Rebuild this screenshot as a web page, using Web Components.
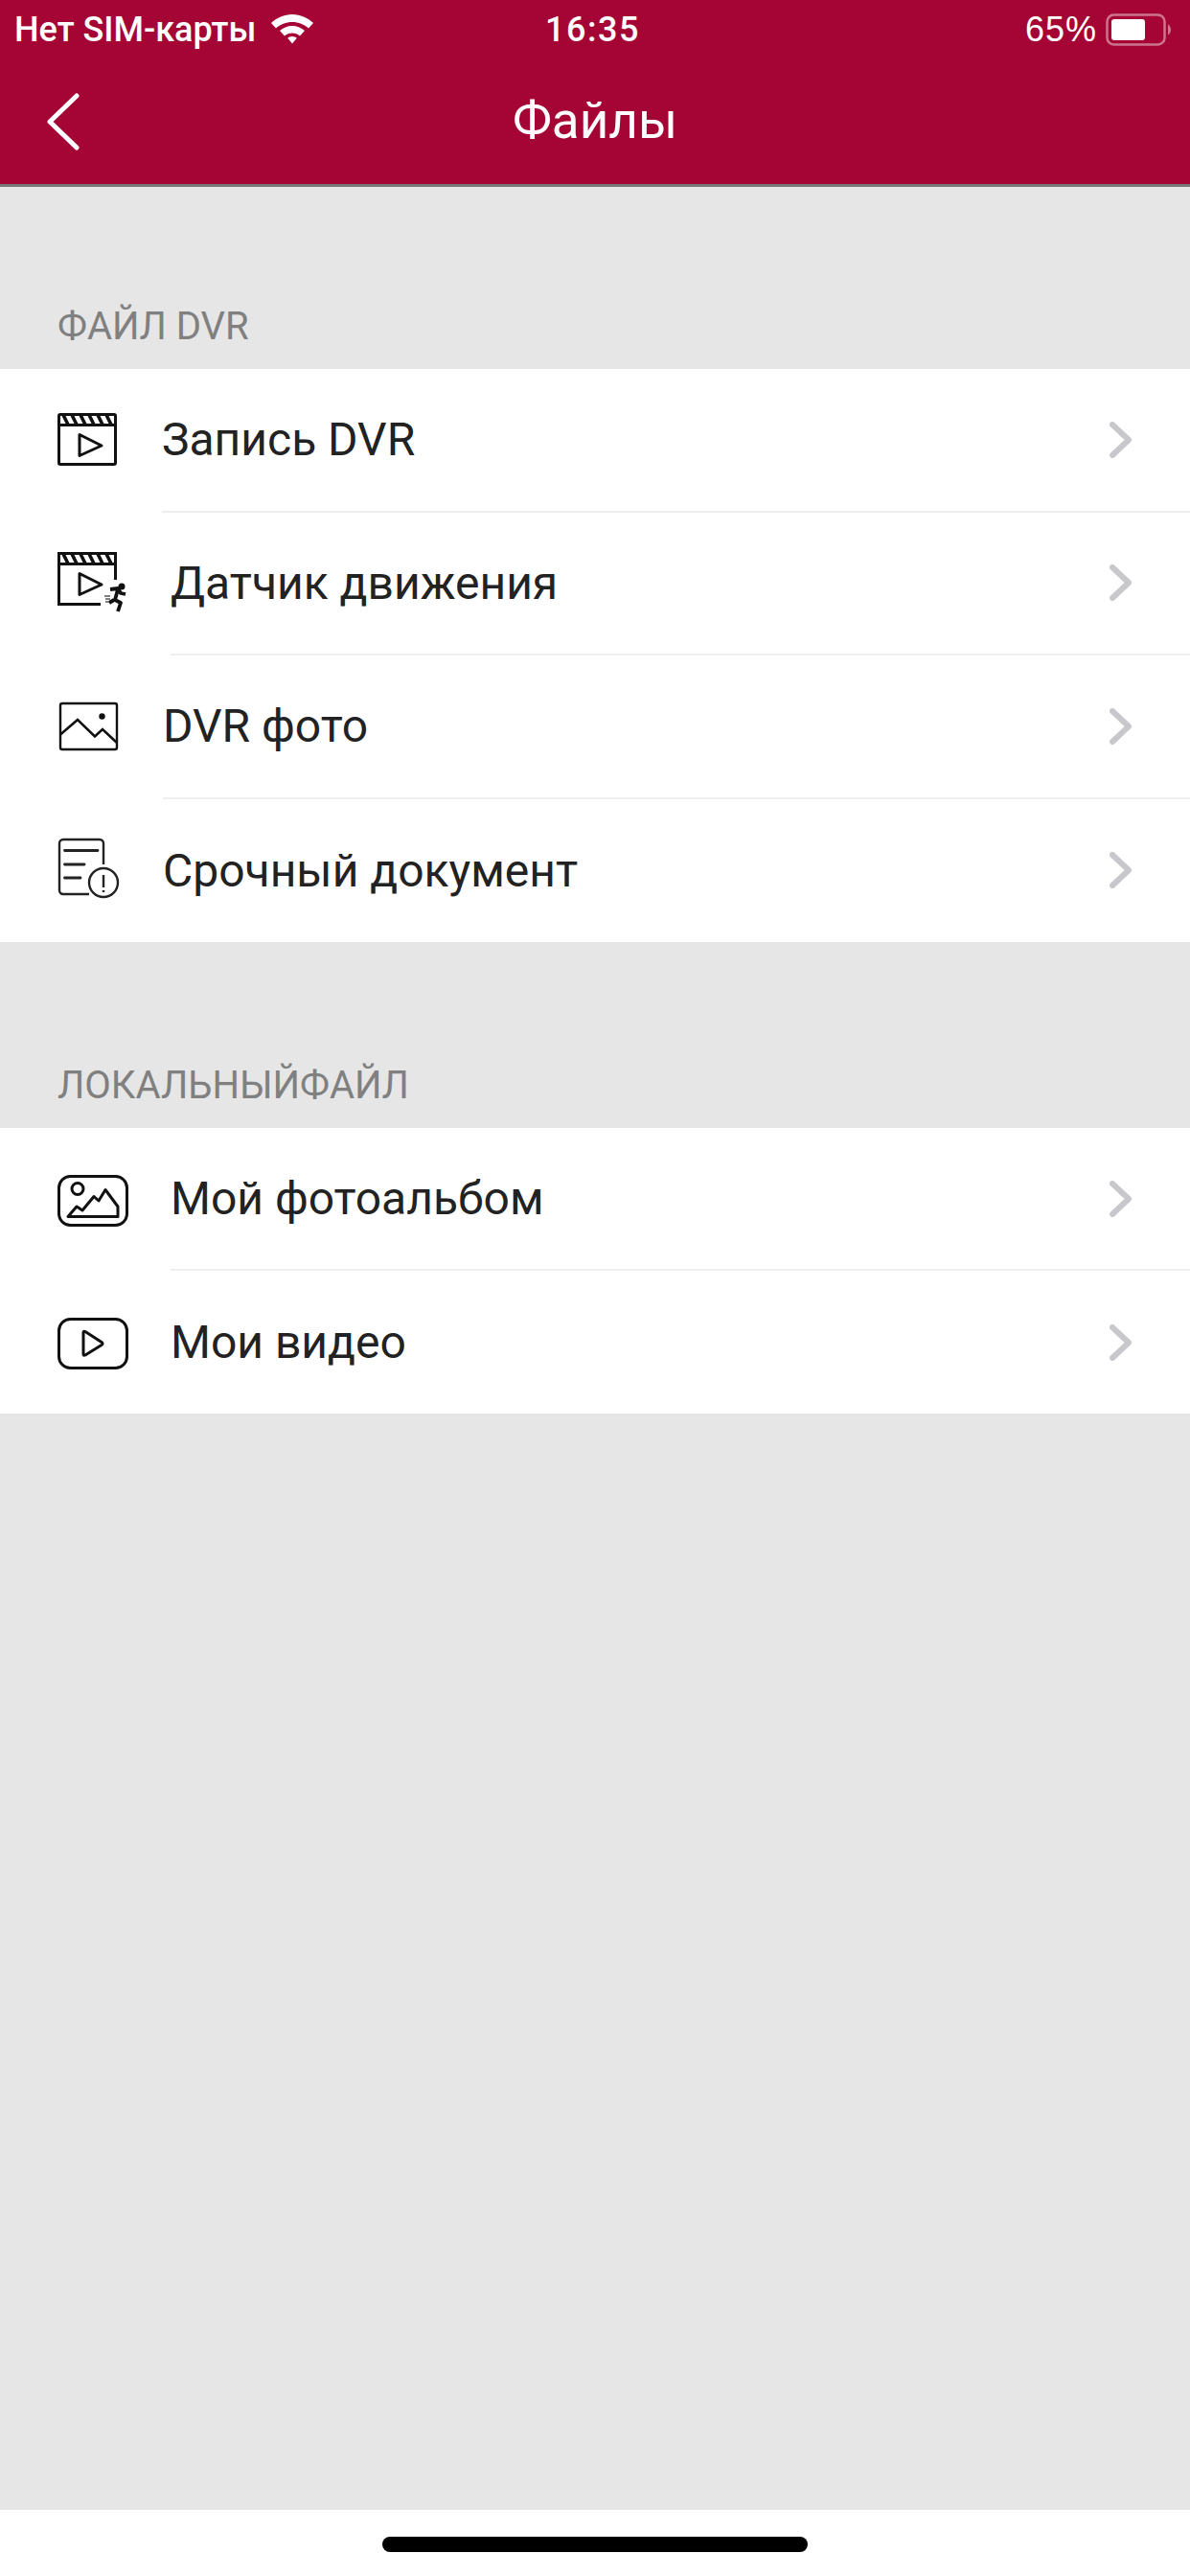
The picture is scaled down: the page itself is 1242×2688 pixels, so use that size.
<!DOCTYPE html>
<html lang="ru">
<head>
<meta charset="utf-8">
<title>Файлы</title>
<style>
  html, body { margin: 0; height: 100%; }
  body { background: #e6e6e6; font-family: Roboto, "Liberation Sans", sans-serif; }
</style>
</head>
<body>
<files-app>
  <status-bar carrier="Нет SIM-карты" time="16:35" battery="65%"></status-bar>
  <nav-header title-text="Файлы"></nav-header>
  <file-section label="ФАЙЛ DVR" style="--top: 123px; --bottom: 21px; --row-h: 149.5px">
    <file-row label="Запись DVR" gap="29">
      <svg slot="icon" viewBox="0 0 100 100" fill="none" stroke="#111" stroke-width="3">
        <rect x="21.500" y="22.500" width="59" height="52" rx="1.500"/>
        <path d="M21.500 33.500H80.500"/>
        <path d="M26 23l5 10M35 23l5 10M44 23l5 10M53 23l5 10M62 23l5 10M71 23l5 10" stroke-width="3.600"/>
        <path d="M43 43.500L66 55 43 65.500Z" stroke-linejoin="round"/>
      </svg>
    </file-row>
    <file-row label="Датчик движения" gap="38">
      <svg slot="icon" viewBox="0 0 100 100" fill="none" stroke="#111" stroke-width="3">
        <path d="M80.500 46V18.500H21.500V71.500H65"/>
        <path d="M21.500 29.500H80.500"/>
        <path d="M26 19l5 10M35 19l5 10M44 19l5 10M53 19l5 10M62 19l5 10M71 19l5 10" stroke-width="3.600"/>
        <path d="M43 39.500L66 51 43 61.500Z" stroke-linejoin="round"/>
        <circle cx="87" cy="53" r="3.500" fill="#111" stroke="none"/>
        <path d="M75 56l8-1 3 5 5 1M83 56l-3 11 6 3-3 9M79 67l-5 3" stroke-width="3.800" stroke-linejoin="round"/>
        <path d="M69 63h6M70 66h5M70 69h4" stroke-width="1.400" stroke="#555"/>
      </svg>
    </file-row>
    <file-row label="DVR фото" gap="30">
      <svg slot="icon" viewBox="0 0 100 100" fill="none" stroke="#111" stroke-width="2.400">
        <rect x="23" y="25" width="59" height="48" rx="2"/>
        <path d="M23 57.500L41 42 59 59.500 67 52 82 66" stroke-width="2.600"/>
        <circle cx="66.500" cy="38.500" r="3.200" fill="#111" stroke="none"/>
      </svg>
    </file-row>
    <file-row label="Срочный документ" gap="30" last>
      <svg slot="icon" viewBox="0 0 100 100" fill="none" stroke="#222" stroke-width="2.400">
        <path d="M68 44V22a4 4 0 0 0-4-4H26a4 4 0 0 0-4 4V71a4 4 0 0 0 4 4H53"/>
        <path d="M27.500 29.500H62M27.500 44H48M27.500 58H44" stroke-width="2.800" stroke-linecap="round"/>
        <circle cx="68" cy="63" r="15"/>
        <path d="M68 55V68M68 71V73"/>
      </svg>
    </file-row>
  </file-section>
  <file-section label="ЛОКАЛЬНЫЙФАЙЛ" style="--top: 127px; --bottom: 21px; --row-h: 149px">
    <file-row label="Мой фотоальбом" gap="38">
      <svg slot="icon" viewBox="0 0 100 100" fill="none" stroke="#111" stroke-width="3">
        <rect x="21.500" y="25.500" width="71" height="51" rx="12"/>
        <circle cx="41" cy="38.500" r="6"/>
        <path d="M31 67.500L40 57 46 61 58 46.500 63 51 70 39.500 83 57V67.500Z" stroke-linejoin="round"/>
      </svg>
    </file-row>
    <file-row label="Мои видео" gap="38" last>
      <svg slot="icon" viewBox="0 0 100 100" fill="none" stroke="#111" stroke-width="3">
        <rect x="21.500" y="25.500" width="71" height="51" rx="12"/>
        <path d="M47 39.500Q47 37.500 49 38.500L66 49.500Q68 51 66 52.500L49 63Q47 64 47 62Z" stroke-linejoin="round"/>
      </svg>
    </file-row>
  </file-section>
  <home-indicator></home-indicator>
</files-app>

<script>
class FilesApp extends HTMLElement {
  constructor() {
    super();
    this.attachShadow({ mode: 'open' });
    this.shadowRoot.innerHTML = `
      <style>
        :host { display: flex; flex-direction: column; height: 2688px; background: #e6e6e6; }
      </style>
      <slot></slot>
    `;
  }
}

class StatusBar extends HTMLElement {
  constructor() {
    super();
    this.attachShadow({ mode: 'open' });
    this.shadowRoot.innerHTML = `
      <style>
        :host {
          display: grid;
          grid-template-columns: 1fr auto 1fr;
          align-items: center;
          height: 62px;
          padding: 0 20px 0 15px;
          background: #a50534;
          color: #fff;
          font: 400 36px "Liberation Sans", Roboto, sans-serif;
        }
        .left, .right { display: flex; align-items: center; }
        .left { gap: 15px; }
        .right { justify-content: flex-end; gap: 9px; }
        .carrier { font: 500 36px Roboto, "Liberation Sans", sans-serif; }
        .time { font: 500 36px Roboto, "Liberation Sans", sans-serif; letter-spacing: 1.5px; }
        .pct { letter-spacing: 1px; }
        svg { display: block; }
      </style>
      <div class="left">
        <span class="carrier">${this.getAttribute('carrier')}</span>
        <svg width="46" height="38" viewBox="0 0 46 38" fill="#fff">
          <path d="M23 3C14.500 3 7 6.500 1 12L6 17.500C10.500 13.500 16.500 11 23 11S35.500 13.500 40 17.500L45 12C39 6.500 31.500 3 23 3Z"/>
          <path d="M23 15C18 15 13.500 17 10 20L15 25.500C17.200 23.700 20 22.500 23 22.500S28.800 23.700 31 25.500L36 20C32.500 17 28 15 23 15Z"/>
          <path d="M23 26C21 26 19.500 26.800 18.200 27.800L23 33.500 27.800 27.800C26.500 26.800 25 26 23 26Z"/>
        </svg>
      </div>
      <span class="time">${this.getAttribute('time')}</span>
      <div class="right">
        <span class="pct">${this.getAttribute('battery')}</span>
        <svg width="68" height="34" viewBox="0 0 68 34" fill="none">
          <rect x="1.500" y="1.500" width="60" height="31" rx="7" stroke="#fff" stroke-opacity=".45" stroke-width="2.500"/>
          <rect x="6" y="6" width="35" height="22" rx="3" fill="#fff"/>
          <path d="M65 11.500C67 12.500 68 14.500 68 17S67 21.500 65 22.500Z" fill="#fff" fill-opacity=".45"/>
        </svg>
      </div>
    `;
  }
}

class NavHeader extends HTMLElement {
  constructor() {
    super();
    this.attachShadow({ mode: 'open' });
    this.shadowRoot.innerHTML = `
      <style>
        :host {
          display: grid;
          grid-template-columns: 1fr auto 1fr;
          align-items: center;
          height: 130px;
          padding: 0 48px;
          background: #a50534;
          border-bottom: 3px solid #777;
          color: #fff;
          font: 400 53px Roboto, "Liberation Sans", sans-serif;
        }
        svg { display: block; }
        span { margin-bottom: 3px; }
      </style>
      <svg width="36" height="60" viewBox="0 0 36 60" fill="none" stroke="#fff" stroke-width="5" stroke-linecap="round" stroke-linejoin="round">
        <path d="M32 3L4 30 32 57"/>
      </svg>
      <span>${this.getAttribute('title-text')}</span>
      <span></span>
    `;
  }
}

class FileSection extends HTMLElement {
  constructor() {
    super();
    this.attachShadow({ mode: 'open' });
    this.shadowRoot.innerHTML = `
      <style>
        :host { display: block; }
        .label {
          padding: var(--top, 123px) 60px var(--bottom, 20px);
          color: #808080;
          font: 400 40px/46px Roboto, "Liberation Sans", sans-serif;
        }
        .rows { background: #fff; }
      </style>
      <div class="label">${this.getAttribute('label')}</div>
      <div class="rows"><slot></slot></div>
    `;
  }
}

class FileRow extends HTMLElement {
  constructor() {
    super();
    const gap = this.getAttribute('gap') || 30;
    const last = this.hasAttribute('last');
    this.attachShadow({ mode: 'open' });
    this.shadowRoot.innerHTML = `
      <style>
        :host { display: flex; align-items: center; height: var(--row-h, 150px); padding-left: 40px; background: #fff; box-sizing: border-box; }
        ::slotted(svg) { flex: none; width: 100px; height: 100px; }
        .body {
          flex: 1;
          align-self: stretch;
          display: flex;
          align-items: center;
          justify-content: space-between;
          margin-left: ${gap}px;
          padding-right: 60px;
          border-bottom: ${last ? 0 : 2}px solid #eeeeee;
          color: #222;
          font: 400 48px Roboto, "Liberation Sans", sans-serif;
        }
        svg { display: block; }
      </style>
      <slot name="icon"></slot>
      <div class="body">
        <span>${this.getAttribute('label')}</span>
        <svg width="24" height="38" viewBox="0 0 24 38" fill="none" stroke="#c7c7cc" stroke-width="6" stroke-linecap="round" stroke-linejoin="round">
          <path d="M3 3L20 19 3 35"/>
        </svg>
      </div>
    `;
  }
}

class HomeIndicator extends HTMLElement {
  constructor() {
    super();
    this.attachShadow({ mode: 'open' });
    this.shadowRoot.innerHTML = `
      <style>
        :host {
          display: flex;
          justify-content: center;
          height: 69px;
          margin-top: auto;
          padding-top: 28px;
          box-sizing: border-box;
          background: #fff;
        }
        .bar { width: 444px; height: 16px; border-radius: 8px; background: #000; }
      </style>
      <div class="bar"></div>
    `;
  }
}

customElements.define('files-app', FilesApp);
customElements.define('status-bar', StatusBar);
customElements.define('nav-header', NavHeader);
customElements.define('file-section', FileSection);
customElements.define('file-row', FileRow);
customElements.define('home-indicator', HomeIndicator);
</script>
</body>
</html>
